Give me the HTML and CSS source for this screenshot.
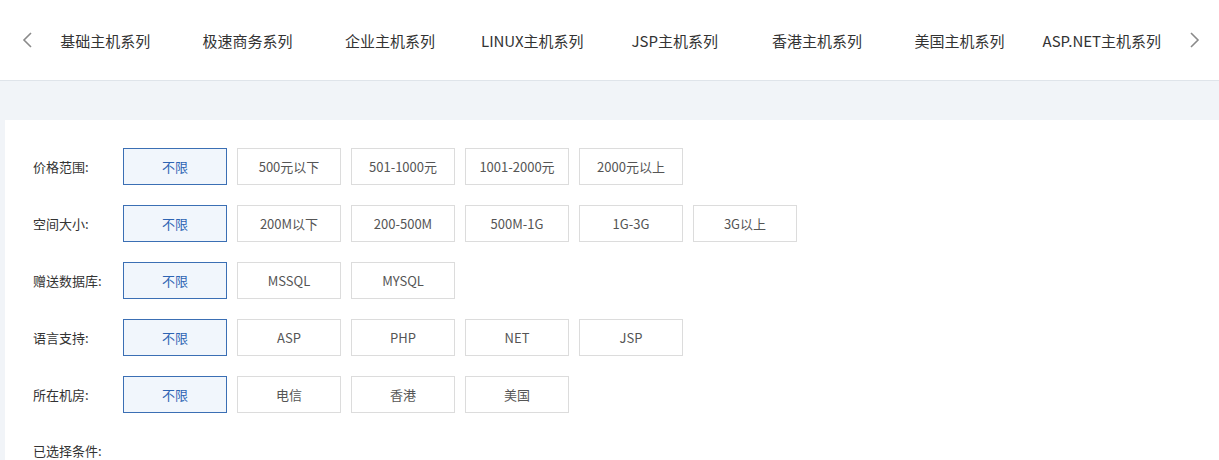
FILE: index.html
```html
<!DOCTYPE html>
<html lang="zh-CN">
<head>
<meta charset="UTF-8">
<meta name="viewport" content="width=device-width, initial-scale=1.0">
<title>主机产品筛选</title>
<link rel="stylesheet" href="styles.css">
</head>
<body>
  <!-- 产品系列导航 -->
  <header class="series-bar">
    <a class="arrow" href="#" aria-label="上一页">
      <svg width="12" height="16" viewBox="0 0 12 16"><path d="M10 1 L3 8 L10 15" fill="none" stroke="#8a8a8a" stroke-width="1.6"/></svg>
    </a>
    <ul class="series-list">
      <li><a href="#">基础主机系列</a></li>
      <li><a href="#">极速商务系列</a></li>
      <li><a href="#">企业主机系列</a></li>
      <li><a href="#">LINUX主机系列</a></li>
      <li><a href="#">JSP主机系列</a></li>
      <li><a href="#">香港主机系列</a></li>
      <li><a href="#">美国主机系列</a></li>
      <li><a href="#">ASP.NET主机系列</a></li>
    </ul>
    <a class="arrow next" href="#" aria-label="下一页">
      <svg width="12" height="16" viewBox="0 0 12 16"><path d="M2 1 L9 8 L2 15" fill="none" stroke="#8a8a8a" stroke-width="1.6"/></svg>
    </a>
  </header>

  <div class="page">
    <section class="filter-panel">
      <div class="filter-row">
        <span class="filter-label">价格范围:</span>
        <div class="options">
          <a class="opt active" href="#">不限</a>
          <a class="opt" href="#">500元以下</a>
          <a class="opt" href="#">501-1000元</a>
          <a class="opt" href="#">1001-2000元</a>
          <a class="opt" href="#">2000元以上</a>
        </div>
      </div>
      <div class="filter-row">
        <span class="filter-label">空间大小:</span>
        <div class="options">
          <a class="opt active" href="#">不限</a>
          <a class="opt" href="#">200M以下</a>
          <a class="opt" href="#">200-500M</a>
          <a class="opt" href="#">500M-1G</a>
          <a class="opt" href="#">1G-3G</a>
          <a class="opt" href="#">3G以上</a>
        </div>
      </div>
      <div class="filter-row">
        <span class="filter-label">赠送数据库:</span>
        <div class="options">
          <a class="opt active" href="#">不限</a>
          <a class="opt" href="#">MSSQL</a>
          <a class="opt" href="#">MYSQL</a>
        </div>
      </div>
      <div class="filter-row">
        <span class="filter-label">语言支持:</span>
        <div class="options">
          <a class="opt active" href="#">不限</a>
          <a class="opt" href="#">ASP</a>
          <a class="opt" href="#">PHP</a>
          <a class="opt" href="#">NET</a>
          <a class="opt" href="#">JSP</a>
        </div>
      </div>
      <div class="filter-row">
        <span class="filter-label">所在机房:</span>
        <div class="options">
          <a class="opt active" href="#">不限</a>
          <a class="opt" href="#">电信</a>
          <a class="opt" href="#">香港</a>
          <a class="opt" href="#">美国</a>
        </div>
      </div>
      <div class="selected">已选择条件:</div>
    </section>
  </div>
</body>
</html>
```

FILE: styles.css
```css
body { margin: 0; padding: 0; font-family: "Noto Sans CJK SC", "Microsoft YaHei", sans-serif; background: #f1f4f8; color: #333; }
a { text-decoration: none; }

.series-bar { display: flex; align-items: center; height: 81px; background: #fff; border-bottom: 1px solid #dfe4ea; box-sizing: border-box; padding: 0 0 0 21px; }
.series-bar .arrow { display: flex; width: 13px; height: 16px; }
.series-bar .arrow.next { margin-left: 16px; }
.series-list { display: flex; width: 1139px; margin: 0; padding: 0; list-style: none; }
.series-list li { flex: 1; text-align: center; }
.series-list a { color: #333; font-size: 15px; }

.page { padding: 39px 0 0 5px; }
.filter-panel { background: #fff; padding: 28px 0 0 28px; height: 340px; box-sizing: border-box; }
.filter-row { display: flex; align-items: center; margin-bottom: 20px; }
.filter-label { width: 90px; font-size: 13px; color: #333; }
.options { display: flex; gap: 10px; }
.opt { display: flex; align-items: center; justify-content: center; width: 104px; height: 37px; box-sizing: border-box; border: 1px solid #dcdcdc; font-size: 13px; color: #555; background: #fff; }
.opt.active { border-color: #3b6fb4; background: #f1f6fc; color: #2d64b3; }
.selected { font-size: 13px; line-height: 16px; color: #333; padding-top: 10px; }
```
